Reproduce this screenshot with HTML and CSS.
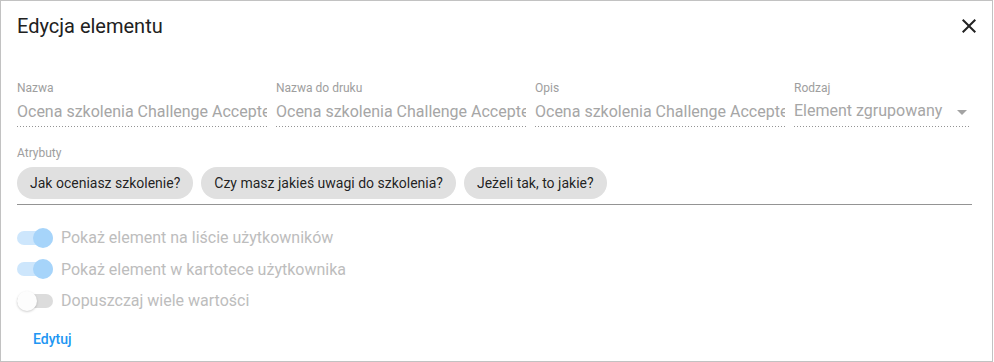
FILE: index.html
```html
<!DOCTYPE html>
<html lang="pl">
<head>
<meta charset="utf-8">
<title>Edycja elementu</title>
<link rel="stylesheet" href="styles.css">
</head>
<body>
<div class="dialog">
  <div class="header">
    <h1 class="title">Edycja elementu</h1>
    <button class="close" aria-label="Zamknij">
      <svg viewBox="0 0 24 24" width="24" height="24"><path d="M19 6.41L17.59 5 12 10.59 6.41 5 5 6.41 10.59 12 5 17.59 6.41 19 12 13.41 17.59 19 19 17.59 13.41 12z" fill="#222"/></svg>
    </button>
  </div>

  <div class="fields">
    <label class="field">
      <span class="label">Nazwa</span>
      <input class="value" type="text" disabled value="Ocena szkolenia Challenge Accepted">
    </label>
    <label class="field">
      <span class="label">Nazwa do druku</span>
      <input class="value" type="text" disabled value="Ocena szkolenia Challenge Accepted">
    </label>
    <label class="field">
      <span class="label">Opis</span>
      <input class="value" type="text" disabled value="Ocena szkolenia Challenge Accepted">
    </label>
    <div class="field field-select">
      <span class="label">Rodzaj</span>
      <div class="value select-value">
        <span class="select-text">Element zgrupowany</span>
        <svg class="arrow" viewBox="0 0 10 5" width="10" height="5"><path d="M0 0 L5 5 L10 0 Z" fill="#a3a3a3"/></svg>
      </div>
    </div>
  </div>

  <div class="attrs">
    <div class="label">Atrybuty</div>
    <div class="chips">
      <span class="chip">Jak oceniasz szkolenie?</span>
      <span class="chip">Czy masz jakieś uwagi do szkolenia?</span>
      <span class="chip">Jeżeli tak, to jakie?</span>
    </div>
  </div>

  <div class="toggles">
    <div class="toggle-row">
      <span class="toggle on"><span class="track"></span><span class="thumb"></span></span>
      <span class="toggle-label">Pokaż element na liście użytkowników</span>
    </div>
    <div class="toggle-row">
      <span class="toggle on"><span class="track"></span><span class="thumb"></span></span>
      <span class="toggle-label">Pokaż element w kartotece użytkownika</span>
    </div>
    <div class="toggle-row">
      <span class="toggle off"><span class="track"></span><span class="thumb"></span></span>
      <span class="toggle-label">Dopuszczaj wiele wartości</span>
    </div>
  </div>

  <div class="actions">
    <button class="link-btn">Edytuj</button>
  </div>
</div>
</body>
</html>
```

FILE: styles.css
```css
* { box-sizing: border-box; }

html, body {
  margin: 0;
  padding: 0;
  background: #fff;
}

body {
  font-family: Roboto, "Liberation Sans", Arial, sans-serif;
  color: rgba(0, 0, 0, 0.87);
}

.dialog {
  width: 993px;
  height: 362px;
  border: 1px solid #c2c2c2;
  padding: 13px 20px 0 16px;
  display: flex;
  flex-direction: column;
  overflow: hidden;
}

.header {
  display: flex;
  align-items: center;
  justify-content: space-between;
  height: 24px;
}

.title {
  margin: 0;
  font-size: 20px;
  line-height: 24px;
  font-weight: 400;
  color: #212121;
}

.close {
  border: 0;
  background: none;
  padding: 0;
  margin-right: -9px;
  width: 24px;
  height: 24px;
  display: flex;
  cursor: pointer;
}

.fields {
  display: grid;
  grid-template-columns: 250px 250px 250px 1fr;
  column-gap: 9px;
  margin-top: 43px;
}

.field {
  display: flex;
  flex-direction: column;
  min-width: 0;
}

.label {
  display: block;
  font-size: 12px;
  line-height: 14px;
  color: #9e9e9e;
}

.value {
  display: block;
  width: 100%;
  margin: 0;
  border: 0;
  outline: 0;
  font-family: Roboto, "Liberation Sans", Arial, sans-serif;
  font-size: 16px;
  line-height: 20px;
  color: #a6a6a6;
  -webkit-text-fill-color: #a6a6a6;
  white-space: nowrap;
  overflow: hidden;
  padding: 6px 0 6px 0;
  height: 32px;
  background-color: transparent;
  background-image: linear-gradient(to right, rgba(0,0,0,0.42) 0%, rgba(0,0,0,0.42) 33%, transparent 0%);
  background-size: 3px 1px;
  background-repeat: repeat-x;
  background-position: 0 bottom;
}

.field-select .value {
  width: auto;
  margin-right: 3px;
}

.select-value {
  display: flex;
  align-items: flex-start;
  justify-content: space-between;
}

.arrow {
  margin-top: 9px;
  margin-right: 2px;
}

.attrs {
  margin-top: 19px;
  border-bottom: 1px solid rgba(0, 0, 0, 0.42);
  padding-bottom: 5px;
}

.chips {
  display: flex;
  gap: 8px;
  margin-top: 7px;
}

.chip {
  display: inline-flex;
  align-items: center;
  height: 32px;
  padding: 0 13px;
  border-radius: 16px;
  background: #e0e0e0;
  font-size: 14px;
  color: rgba(0, 0, 0, 0.87);
}

.toggles {
  display: flex;
  flex-direction: column;
  margin-top: 17px;
}

.toggle-row {
  display: flex;
  align-items: center;
  height: 31.5px;
}

.toggle {
  position: relative;
  width: 36px;
  height: 20px;
  flex: none;
}

.track {
  position: absolute;
  left: 0;
  top: 3px;
  width: 36px;
  height: 14px;
  border-radius: 7px;
}

.thumb {
  position: absolute;
  top: 0;
  width: 20px;
  height: 20px;
  border-radius: 50%;
}

.toggle.on .track { background: #cde6fc; }
.toggle.on .thumb { left: 16px; background: #a6d4fa; }

.toggle.off .track { background: #dcdcdc; }
.toggle.off .thumb {
  left: 0;
  background: #fdfdfd;
  box-shadow: 0 1px 2px rgba(0, 0, 0, 0.12), 0 1px 3px rgba(0, 0, 0, 0.08);
}

.toggle-label {
  margin-left: 8px;
  font-size: 16px;
  color: #bdbdbd;
}

.actions {
  margin-top: 4px;
}

.link-btn {
  border: 0;
  background: none;
  font-family: Roboto, "Liberation Sans", Arial, sans-serif;
  font-size: 14px;
  font-weight: 500;
  color: #2196f3;
  height: 36px;
  padding: 0 16px;
  cursor: pointer;
}
```
